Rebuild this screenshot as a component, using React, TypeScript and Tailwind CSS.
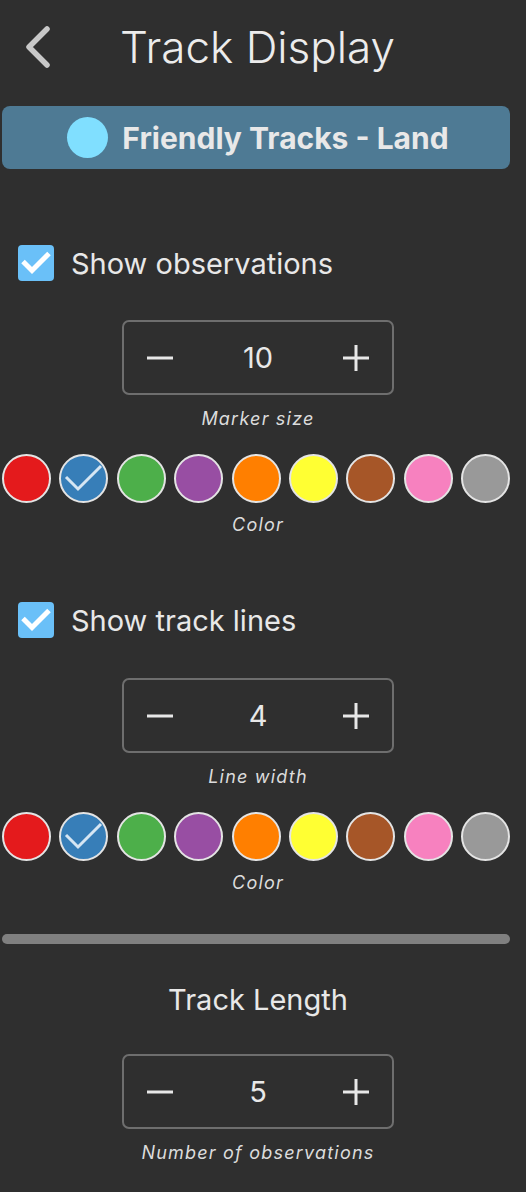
import React from "react";

const COLORS = ["#e41a1c", "#377eb8", "#4daf4a", "#984ea3", "#ff7f00", "#ffff33", "#a65628", "#f781bf", "#999999"];

function Checkbox({ label }: { label: string }) {
  return (
    <div className="flex items-center ml-[18px] gap-[17px]">
      <div className="w-[36px] h-[36px] rounded-[4px] bg-[#6ac0f8]">
        <svg width="36" height="36" viewBox="0 0 36 36" fill="none">
          <path d="M5 16.5l9 9L31 8.5" stroke="#ffffff" strokeWidth="5" />
        </svg>
      </div>
      <span className="text-[29px] text-[#e8e8e8] leading-none">{label}</span>
    </div>
  );
}

function Stepper({ value, label }: { value: string; label: string }) {
  return (
    <div className="flex flex-col items-center">
      <div className="w-[272px] h-[75px] border-2 border-[#6e6e6e] rounded-[7px] flex items-center justify-between px-[23px]">
        <svg width="26" height="26" viewBox="0 0 26 26">
          <rect x="0" y="11.5" width="26" height="3" fill="#e8e8e8" />
        </svg>
        <span className="text-[29px] text-[#e8e8e8] leading-none">{value}</span>
        <svg width="26" height="26" viewBox="0 0 26 26">
          <rect x="0" y="11.5" width="26" height="3" fill="#e8e8e8" />
          <rect x="11.5" y="0" width="3" height="26" fill="#e8e8e8" />
        </svg>
      </div>
      <span className="mt-[15px] text-[18px] italic tracking-[1.2px] text-[#dcdcdc] leading-none">{label}</span>
    </div>
  );
}

function Swatches() {
  return (
    <div className="flex flex-col items-center">
      <div className="flex justify-between w-[508px] ml-[2px] self-start">
        {COLORS.map((c, i) => (
          <div
            key={c}
            className="w-[49px] h-[49px] rounded-full border-2 border-[#e4e4e4]"
            style={{ backgroundColor: c }}
          >
            {i === 1 && (
              <svg width="45" height="45" viewBox="0 0 45 45" fill="none">
                <path d="M5 21l12 12L40 10" stroke="#d6e6f3" strokeWidth="3" />
              </svg>
            )}
          </div>
        ))}
      </div>
      <span className="mt-[13px] text-[18px] italic tracking-[1.2px] text-[#dcdcdc] leading-none">Color</span>
    </div>
  );
}

export default function App() {
  return (
    <div
      className="w-[526px] h-[1192px] bg-[#2f2f2f] overflow-hidden"
      style={{ fontFamily: "Inter, 'Noto Sans', sans-serif" }}
    >
      <div className="w-[516px] flex flex-col">
        <div className="flex items-center h-[94px]">
          <svg className="ml-[24px]" width="28" height="44" viewBox="0 0 28 44" fill="none">
            <path d="M23 4L5 22l18 18" stroke="#c8c8c8" strokeWidth="5.5" strokeLinecap="round" strokeLinejoin="round" />
          </svg>
          <h1 className="ml-[68px] text-[44px] font-light text-[#ececec] leading-none">Track Display</h1>
        </div>
        <div className="ml-[2px] mt-[12px] h-[63px] w-[508px] rounded-[8px] bg-[#4e7a94] flex items-center justify-center gap-[14px] pl-[4px]">
          <div className="w-[41px] h-[41px] rounded-full bg-[#80dfff]" />
          <span className="text-[30px] font-bold text-[#e8e8e8] leading-none">Friendly Tracks - Land</span>
        </div>

        <div className="mt-[76px]">
          <Checkbox label="Show observations" />
        </div>
        <div className="mt-[39px]">
          <Stepper value="10" label="Marker size" />
        </div>
        <div className="mt-[26px]">
          <Swatches />
        </div>

        <div className="mt-[68px]">
          <Checkbox label="Show track lines" />
        </div>
        <div className="mt-[40px]">
          <Stepper value="4" label="Line width" />
        </div>
        <div className="mt-[26px]">
          <Swatches />
        </div>

        <div className="ml-[2px] mt-[42px] h-[10px] w-[508px] rounded-full bg-[#808080]" />

        <div className="mt-[41px] text-center text-[29px] text-[#e8e8e8] leading-none">Track Length</div>
        <div className="mt-[40px]">
          <Stepper value="5" label="Number of observations" />
        </div>
      </div>
    </div>
  );
}
